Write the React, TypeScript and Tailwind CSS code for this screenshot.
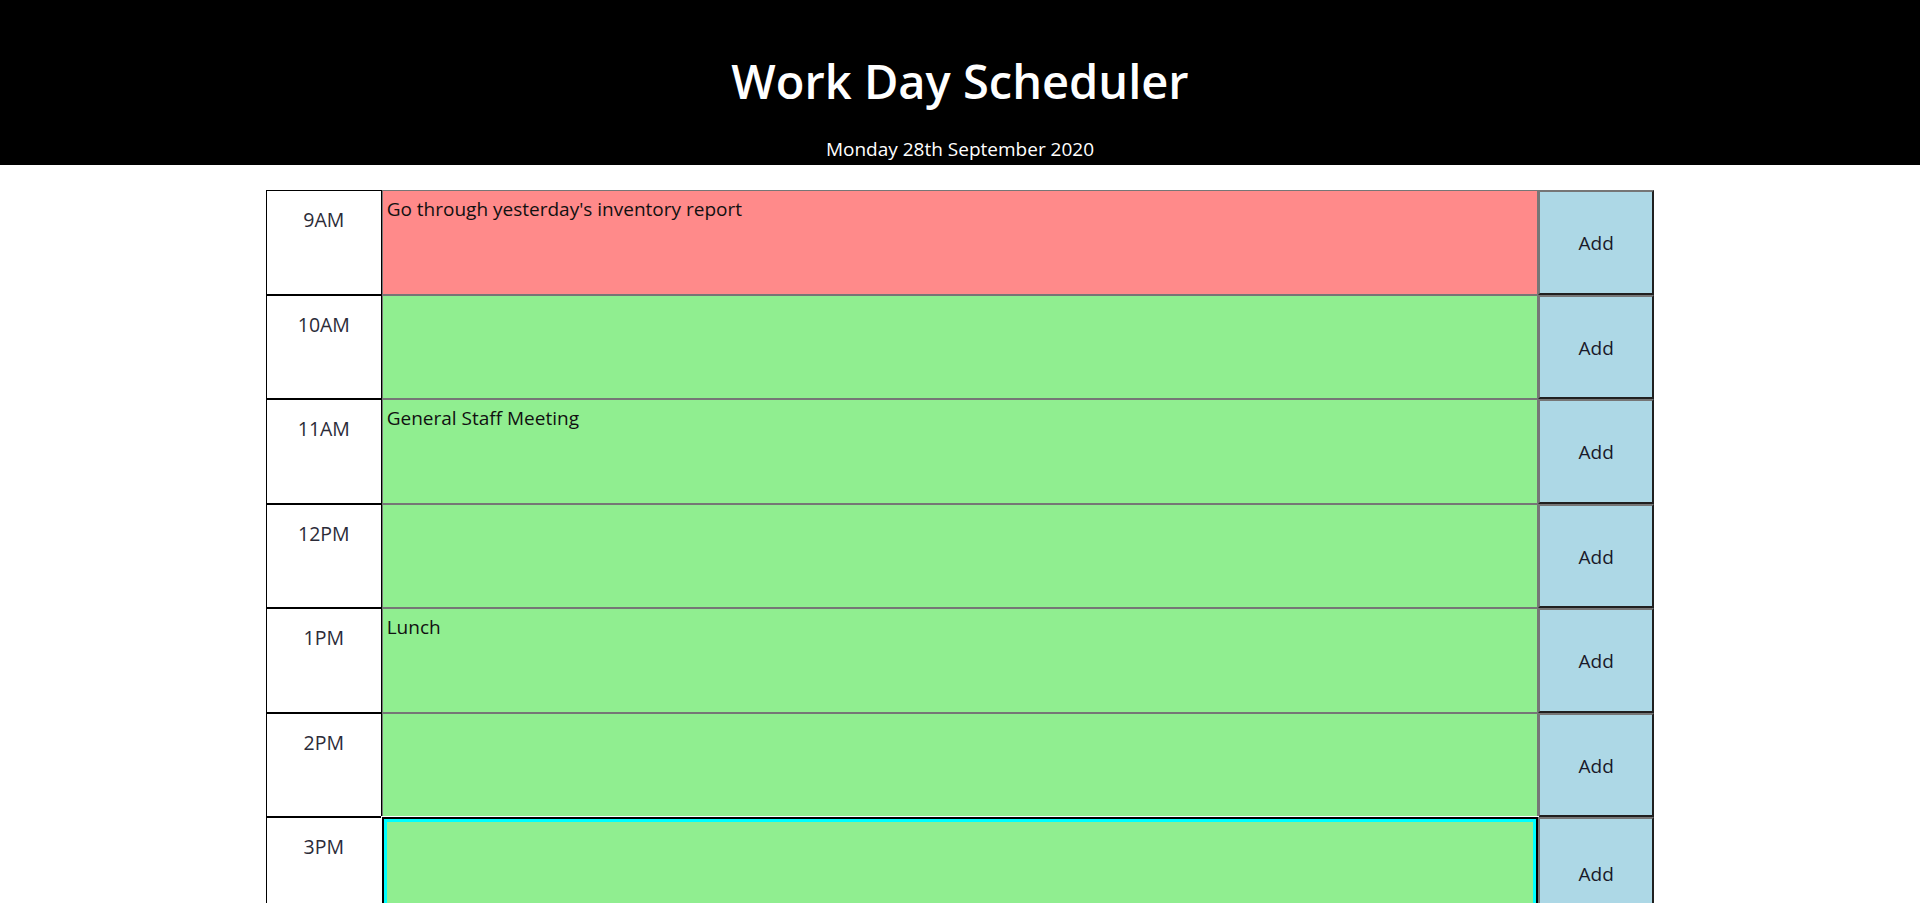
import { useState } from "react";

type Slot = { hour: string; text: string; state: "past" | "future" };

const slots: Slot[] = [
  { hour: "9AM", text: "Go through yesterday's inventory report", state: "past" },
  { hour: "10AM", text: "", state: "future" },
  { hour: "11AM", text: "General Staff Meeting", state: "future" },
  { hour: "12PM", text: "", state: "future" },
  { hour: "1PM", text: "Lunch", state: "future" },
  { hour: "2PM", text: "", state: "future" },
  { hour: "3PM", text: "", state: "future" },
  { hour: "4PM", text: "", state: "future" },
  { hour: "5PM", text: "", state: "future" },
];

const TimeBlock = ({ slot, focused }: { slot: Slot; focused: boolean }) => {
  const [value, setValue] = useState(slot.text);

  return (
    <div className={focused ? "flex h-[112px] w-full" : "flex h-[104.5px] w-full"}>
      <div className="w-1/12 border border-black bg-white pt-[16px] text-center text-[19.5px] leading-[26px] text-[#2b2b38]">
        {slot.hour}
      </div>
      <textarea
        value={value}
        onChange={(e) => setValue(e.target.value)}
        className={
          slot.state === "past"
            ? "h-full w-10/12 resize-none border border-[#767676] bg-[#ff8a8a] px-[4px] pt-[6px] text-[19px] leading-[25px] text-[#111] outline-none"
            : focused
              ? "h-full w-10/12 resize-none border-2 border-black bg-[#90ee90] px-[4px] pt-[6px] text-[19px] leading-[25px] text-[#111] shadow-[inset_0_0_0_3px_#00ffff,0_0_0_1px_#ffffff] outline-none"
              : "h-full w-10/12 resize-none border border-[#767676] bg-[#90ee90] px-[4px] pt-[6px] text-[19px] leading-[25px] text-[#111] outline-none"
        }
      />
      <button className="h-full w-1/12 border-2 border-[#767676] border-r-[#202020] border-b-[#202020] bg-[#add8e6] pt-[2px] text-[19px] text-[#1a1a2a]">
        Add
      </button>
    </div>
  );
};

const App = () => {
  return (
    <div className="min-h-screen bg-white" style={{ fontFamily: '"Open Sans", "Noto Sans", sans-serif' }}>
      <header className="flex h-[165px] flex-col items-center bg-black text-white">
        <h1 className="mt-[52px] text-[47px] font-semibold leading-[58px]">Work Day Scheduler</h1>
        <p className="mt-[27px] text-[19px] leading-[24px]">Monday 28th September 2020</p>
      </header>

      <div className="mx-auto mt-[25px] flex w-[1388px] flex-col pb-10">
        {slots.map((slot) => (
          <TimeBlock key={slot.hour} slot={slot} focused={slot.hour === "3PM"} />
        ))}
      </div>
    </div>
  );
};

export default App;
